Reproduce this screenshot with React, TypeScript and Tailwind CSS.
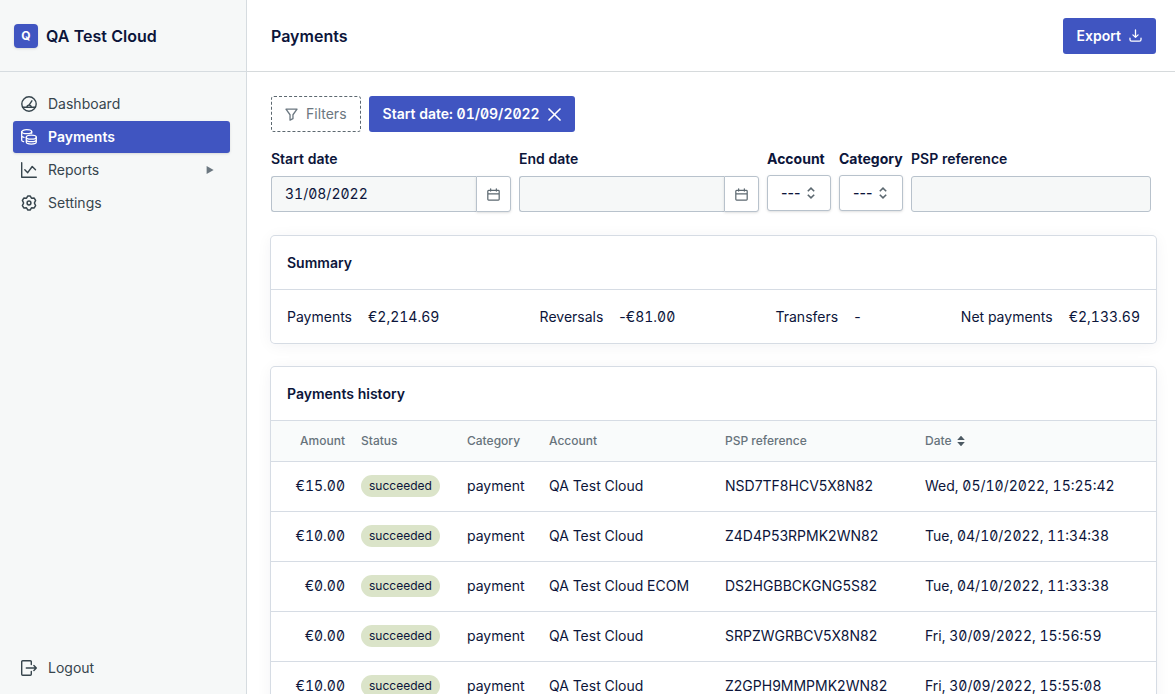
import { useState, type ReactNode } from "react";

type Payment = {
  amount: string;
  status: string;
  category: string;
  account: string;
  reference: string;
  date: string;
};

const payments: Payment[] = [
  { amount: "€15.00", status: "succeeded", category: "payment", account: "QA Test Cloud", reference: "NSD7TF8HCV5X8N82", date: "Wed, 05/10/2022, 15:25:42" },
  { amount: "€10.00", status: "succeeded", category: "payment", account: "QA Test Cloud", reference: "Z4D4P53RPMK2WN82", date: "Tue, 04/10/2022, 11:34:38" },
  { amount: "€0.00", status: "succeeded", category: "payment", account: "QA Test Cloud ECOM", reference: "DS2HGBBCKGNG5S82", date: "Tue, 04/10/2022, 11:33:38" },
  { amount: "€0.00", status: "succeeded", category: "payment", account: "QA Test Cloud", reference: "SRPZWGRBCV5X8N82", date: "Fri, 30/09/2022, 15:56:59" },
  { amount: "€10.00", status: "succeeded", category: "payment", account: "QA Test Cloud", reference: "Z2GPH9MMPMK2WN82", date: "Fri, 30/09/2022, 15:55:08" },
];

const summary = [
  { label: "Payments", sign: "", value: "€2,214.69" },
  { label: "Reversals", sign: "-", value: "€81.00" },
  { label: "Transfers", sign: "-", value: "" },
  { label: "Net payments", sign: "", value: "€2,133.69" },
];

function Icon({ children, className = "size-4 stroke-[1.4]" }: { children: ReactNode; className?: string }) {
  return (
    <svg
      viewBox="0 0 16 16"
      className={className}
      fill="none"
      stroke="currentColor"
      strokeLinecap="round"
      strokeLinejoin="round"
      aria-hidden="true"
    >
      {children}
    </svg>
  );
}

const DashboardIcon = () => (
  <Icon>
    <circle cx="8" cy="8" r="7.2" />
    <path d="M1.6 11.3h12.8M8.200 8.900l2.700-4.100" />
    <path d="M6 11.200a2.100 2.100 0 0 1 4.200 0" />
  </Icon>
);

const CoinsIcon = () => (
  <Icon className="size-4 stroke-[1.3]">
    <ellipse cx="5.7" cy="2.700" rx="5" ry="2" />
    <path d="M.7 2.700v8.600c0 .6.7 1.100 1.900 1.400M.7 6.800c0 .7.900 1.300 2.300 1.600M10.700 2.700v1.600" />
    <ellipse cx="10.300" cy="8.200" rx="5" ry="2" />
    <path d="M5.300 8.200v4.900c0 1.200 2.200 2.100 5 2.100s5-.9 5-2.100V8.200M5.300 10.700c0 1.200 2.200 2 5 2s5-.8 5-2" />
  </Icon>
);

const ChartIcon = () => (
  <Icon>
    <path d="M.7.7v14.600h14.600M3.800 7.800l2.900 2.900 4.500-6.200 3.300 3.300" />
  </Icon>
);

const GearIcon = () => (
  <Icon className="size-4 stroke-[1.5]">
    <circle cx="8" cy="8" r="1.900" />
    <path d="M6.900.9h2.200L10.500 3.200 13.200 3.100 14.600 5.400 13.400 8 14.600 10.600 13.200 12.900 10.500 12.800 9.100 15.100H6.900L5.500 12.800 2.800 12.900 1.400 10.600 2.600 8 1.400 5.400 2.800 3.100 5.500 3.200z" />
  </Icon>
);

const LogoutIcon = () => (
  <Icon>
    <path d="M10.300 4.600V1.700a1 1 0 0 0-1-1H1.700a1 1 0 0 0-1 1v12.600a1 1 0 0 0 1 1h7.600a1 1 0 0 0 1-1v-2.900M5.300 8h10M12.900 5.500 15.300 8l-2.400 2.500" />
  </Icon>
);

const FilterIcon = () => (
  <Icon className="size-[13px] stroke-[1.6]">
    <path d="M1.200 1.500h13.600L9.800 8.300v4.800L6.200 15V8.300z" />
  </Icon>
);

const CloseIcon = () => (
  <Icon className="size-[13px] stroke-2">
    <path d="M1.200 1.200l13.600 13.600M14.800 1.200 1.200 14.800" />
  </Icon>
);

const DownloadIcon = () => (
  <Icon className="size-[13px] stroke-[1.6]">
    <path d="M8 1.200v9M4.800 7.200 8 10.300l3.200-3.100M1.200 11.400v1.400c0 1.100.8 2 1.900 2h9.800c1.100 0 1.900-.9 1.900-2v-1.400" />
  </Icon>
);

const CalendarIcon = () => (
  <Icon className="size-[13px] stroke-[1.500]">
    <path d="M2 2.900h12a1 1 0 0 1 1 1v10a1 1 0 0 1-1 1H2a1 1 0 0 1-1-1v-10a1 1 0 0 1 1-1zM1 7.300h14M4.500 1v2.800M11.500 1v2.800" />
  </Icon>
);

function NavItem({ icon, label, active, nested }: { icon: ReactNode; label: string; active?: boolean; nested?: boolean }) {
  return (
    <a
      href="#"
      className={
        active
          ? "flex h-8 items-center gap-[11px] rounded-[3px] bg-[#4055c1] px-2 font-semibold text-white shadow-sm"
          : "flex h-8 items-center gap-[11px] rounded-[3px] px-2 text-[#37454d]"
      }
    >
      {icon}
      <span className="flex-1">{label}</span>
      {nested && (
        <svg viewBox="0 0 8 8" className="mr-2 size-2 fill-[#6b7780]" aria-hidden="true">
          <path d="M.6 0v8L7.600 4z" />
        </svg>
      )}
    </a>
  );
}

function DateField({ id, label, initial = "" }: { id: string; label: string; initial?: string }) {
  const [value, setValue] = useState(initial);

  return (
    <div className="flex w-60 flex-col gap-[7px]">
      <label htmlFor={id} className="font-semibold">{label}</label>
      <div className="flex h-9">
        <input
          id={id}
          type="text"
          value={value}
          onChange={(e) => setValue(e.target.value)}
          className="min-w-0 flex-1 rounded-l-[3px] border border-r-0 border-[#b8c2cc] bg-[#f6f8f8] px-[13px]"
        />
        <button
          type="button"
          aria-label={`Pick ${label.toLowerCase()}`}
          className="flex w-[35px] items-center justify-center rounded-r-[3px] border border-[#b8c2cc] bg-white text-[#5c6870] shadow-sm"
        >
          <CalendarIcon />
        </button>
      </div>
    </div>
  );
}

function SelectField({ id, label }: { id: string; label: string }) {
  return (
    <div className="flex w-16 flex-col gap-[6px]">
      <label htmlFor={id} className="font-bold">{label}</label>
      <div className="relative">
        <select
          id={id}
          className="h-9 w-full appearance-none rounded-[3px] border border-[#b8c2cc] bg-white px-[13px] font-medium normal-nums shadow-sm"
        >
          <option>---</option>
        </select>
        <svg
          viewBox="0 0 8 12"
          className="pointer-events-none absolute top-3 right-4 h-3 w-2 fill-none stroke-[#5c6870] stroke-[1.6]"
          aria-hidden="true"
        >
          <path d="M.8 4.300 4 1.200l3.200 3.100M.8 7.700 4 10.800l3.200-3.100" />
        </svg>
      </div>
    </div>
  );
}

function Card({ title, children }: { title: string; children: ReactNode }) {
  return (
    <section className="overflow-hidden rounded-[4px] bg-white shadow-[0_0_0_1px_#d6dce4,0_2px_16px_rgba(15,26,61,0.06)]">
      <h2 className="border-b border-[#d6dce4] px-4 py-[17px] font-semibold leading-[19px]">{title}</h2>
      {children}
    </section>
  );
}

export default function App() {
  const [reference, setReference] = useState("");

  return (
    <div className="flex h-screen bg-white font-['Inter',sans-serif] text-sm text-[#0c153a] slashed-zero tabular-nums">

      {/* Sidebar */}
      <aside className="flex w-[247px] shrink-0 flex-col border-r border-[#d6dce0] bg-[#f6f8f8]">
        <div className="flex h-[72px] shrink-0 items-center gap-2 border-b border-[#d6dce0] px-[14px]">
          <span className="flex size-6 items-center justify-center rounded-[4px] bg-[#4055c1] text-xs font-bold text-white shadow-sm">
            Q
          </span>
          <span className="text-base font-semibold">QA Test Cloud</span>
        </div>
        <nav className="flex flex-1 flex-col gap-px pt-4 pr-4 pb-[10px] pl-[13px]">
          <NavItem icon={<DashboardIcon />} label="Dashboard" />
          <NavItem icon={<CoinsIcon />} label="Payments" active />
          <NavItem icon={<ChartIcon />} label="Reports" nested />
          <NavItem icon={<GearIcon />} label="Settings" />
          <div className="mt-auto">
            <NavItem icon={<LogoutIcon />} label="Logout" />
          </div>
        </nav>
      </aside>

      <main className="flex min-w-0 flex-1 flex-col">
        <header className="flex h-[72px] shrink-0 items-center justify-between border-b border-[#d6dadc] pr-[19px] pl-6">
          <h1 className="text-base font-semibold">Payments</h1>
          <button type="button" className="flex h-9 items-center gap-2 rounded-[3px] bg-[#4055c1] px-[14px] font-semibold text-white">
            Export
            <DownloadIcon />
          </button>
        </header>

        <div className="flex-1 overflow-y-auto pt-6 pr-[19px] pb-6 pl-6 [scrollbar-width:none]">

          {/* Filters */}
          <div className="flex gap-2">
            <button type="button" className="flex h-9 items-center gap-2 rounded-[3px] border border-dashed border-[#5c6870] px-[13px] text-[#6b7780]">
              <FilterIcon />
              Filters
            </button>
            <button type="button" className="flex h-9 items-center gap-2 rounded-[3px] bg-[#4055c1] px-[14px] font-semibold text-white">
              Start date: 01/09/2022
              <CloseIcon />
            </button>
          </div>

          <div className="mt-[17px] flex flex-wrap gap-2">
            <DateField id="start-date" label="Start date" initial="31/08/2022" />
            <DateField id="end-date" label="End date" />
            <SelectField id="account" label="Account" />
            <SelectField id="category" label="Category" />
            <div className="flex w-60 flex-col gap-[7px]">
              <label htmlFor="psp-reference" className="font-semibold">PSP reference</label>
              <input
                id="psp-reference"
                type="text"
                value={reference}
                onChange={(e) => setReference(e.target.value)}
                className="h-9 rounded-[3px] border border-[#b8c2cc] bg-[#f6f8f8] px-[13px]"
              />
            </div>
          </div>

          <div className="mt-6 flex flex-col gap-6">
            <Card title="Summary">
              <dl className="flex justify-between px-4 py-[17px]">
                {summary.map((s) => (
                  <div key={s.label} className="flex gap-4 leading-[19px]">
                    <dt>{s.label}</dt>
                    <dd>
                      {s.sign && <span className="normal-nums">{s.sign}</span>}
                      {s.value}
                    </dd>
                  </div>
                ))}
              </dl>
            </Card>

            <Card title="Payments history">
              <table className="w-full table-fixed text-left">
                <thead className="bg-[#f9fbfb] text-xs text-[#67737c]">
                  <tr className="h-10 border-b border-[#d6dce4]">
                    <th className="w-[82px] px-2 text-right font-medium">Amount</th>
                    <th className="w-[106px] px-2 font-medium">Status</th>
                    <th className="w-[82px] px-2 font-medium">Category</th>
                    <th className="w-44 px-2 font-medium">Account</th>
                    <th className="w-50 px-2 font-medium">PSP reference</th>
                    <th className="px-2 font-medium">
                      <button type="button" className="flex items-center gap-1 font-medium">
                        Date
                        <svg viewBox="0 0 10 12" className="h-3 w-[10px] fill-[#4d5a63]" aria-hidden="true">
                          <path d="M5 .8 8.800 5H1.200zM5 11.200 1.200 7h7.600z" />
                        </svg>
                      </button>
                    </th>
                  </tr>
                </thead>
                <tbody>
                  {payments.map((p) => (
                    <tr key={p.reference} className="h-[50px] border-b border-[#d6dce4]">
                      <td className="px-2 text-right">{p.amount}</td>
                      <td className="px-2">
                        <span className="inline-block rounded-full bg-[#dbe4c9] px-2 py-[3px] text-xs">{p.status}</span>
                      </td>
                      <td className="px-2">{p.category}</td>
                      <td className="px-2">{p.account}</td>
                      <td className="px-2 normal-nums">{p.reference}</td>
                      <td className="px-2">{p.date}</td>
                    </tr>
                  ))}
                </tbody>
              </table>
            </Card>
          </div>
        </div>
      </main>
    </div>
  );
}
